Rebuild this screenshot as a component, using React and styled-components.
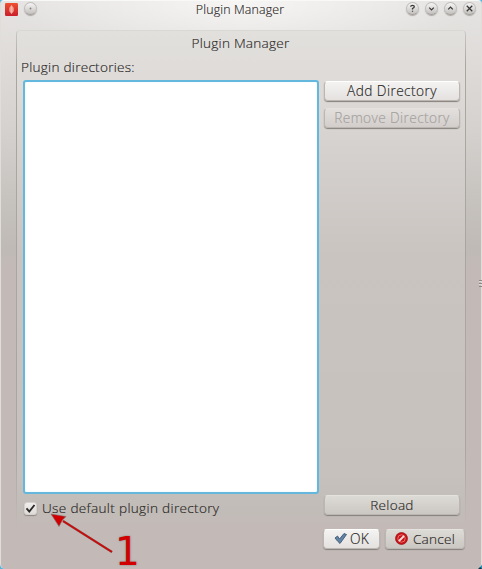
import React from "react";
import styled, { createGlobalStyle } from "styled-components";

const GlobalStyle = createGlobalStyle`
  * { box-sizing: border-box; }
  body { margin: 0; background: #58b4dc; overflow: hidden; }
`;

const Window = styled.main`
  position: relative;
  width: 482px;
  height: 569px;
  padding: 0 16px;
  border: 1px solid #e0ddda;
  border-top-color: #f8f8f7;
  border-bottom: 0;
  border-radius: 4px 4px 5px 5px;
  color: #292624;
  font: 300 14px/20px "Open Sans", "Noto Sans", sans-serif;
  background:
    radial-gradient(ellipse 230px 64px at 50% 0, rgba(255,255,255,.65), transparent),
    linear-gradient(#e6e4e2 0, #dedbd9 60px, #d5d1ce 130px, #c6c2be 200px, #bfbab6 248px, #c3bab7 268px, #c3bab7 100%);
`;

const TitleBar = styled.header`
  display: grid;
  grid-template-columns: 72px 1fr 72px;
  align-items: start;
  height: 15px;
  margin: 0 -11px 0 -13px;
`;

const WindowControls = styled.div`
  display: flex;
  padding-top: ${({ $end }) => $end ? 1 : 0}px;
  gap: 6px;
  justify-content: ${({ $end }) => $end ? "flex-end" : "flex-start"};
`;

const RoundButton = styled.button`
  width: 13px;
  height: 13px;
  padding: 0;
  border: 1px solid #c0bdbb;
  border-bottom-color: #a09d9a;
  border-radius: 50%;
  background: linear-gradient(#f5f5f5, #c4c1be);
  box-shadow: 0 1px 1px #aaa7a4;
  display: grid;
  place-items: center;
`;

const Caption = styled.span`
  display: block;
  white-space: nowrap;
  font-weight: 300;
  -webkit-text-stroke: .15px currentColor;
  font-size: ${({ $size }) => $size || 13.6}px;
  line-height: ${({ $line }) => $line || 20}px;
  letter-spacing: ${({ $track }) => $track || 0}px;
  text-align: ${({ $center }) => $center ? "center" : "left"};
`;

const Panel = styled.section`
  position: relative;
  height: 495px;
  margin-top: 14px;
  padding: 3px 5px 0 4px;
  border-radius: 4px;
  background: linear-gradient(#e2e0dd 0, #dddad7 60px, #d5d1ce 120px, #c9c4c0 225px, #c6c1bc 445px, #c1bcb7 480px, #c3bab7 495px);
  &::before {
    content: "";
    position: absolute;
    inset: 0 -1px;
    border: 1px solid #aaa5a1;
    border-bottom: 0;
    border-top-color: #cecbc8;
    border-radius: 4px 4px 0 0;
    mask-image: linear-gradient(#0006, #000 35px, #000 420px, transparent);
    pointer-events: none;
  }
`;

const PanelBody = styled.div`
  display: grid;
  grid-template-columns: 296px 136px;
  gap: 5px;
  padding-left: 2px;
  height: 436px;
  margin-top: 3px;
`;

const DirectoryList = styled.div`
  height: 414px;
  border: 2px solid #65b8dd;
  border-radius: 3px;
  background: white;
  box-shadow: inset 0 0 1px #a8ddf4;
`;

const Actions = styled.div`
  display: flex;
  flex-direction: column;
  gap: 7px;
  padding-top: 1px;
`;

const PushButton = styled.button`
  display: flex;
  align-items: center;
  justify-content: center;
  gap: ${({ $gap }) => $gap || 0}px;
  width: ${({ $width }) => $width || 136}px;
  height: 20px;
  margin-top: ${({ $bottom }) => $bottom ? "360px" : "0"};
  padding: 0 0 1px;
  border: 1px solid #bbb6b2;
  border-top-color: ${({ $light }) => $light ? "#fff" : "#e4e2de"};
  border-radius: 4px;
  background: ${({ $light, $lower }) => $light ? "linear-gradient(#f4f3f2, #e4e1df)" : $lower ? "linear-gradient(#dddbd6, #cbc7c2)" : "linear-gradient(#e2dfdd, #d3cecb)"};
  box-shadow: 0 1px 1px #86807c;
  color: inherit;
  font: inherit;
  &:disabled { color: #a5a19e; }
`;

const Option = styled.label`
  display: flex;
  align-items: center;
  gap: 5px;
  height: 22px;
  margin-top: -19px;
  padding-left: 3px;
`;

const CheckBox = styled.span`
  display: grid;
  place-items: center;
  width: 13px;
  height: 13px;
  border: 1px solid #d6d1ce;
  border-radius: 3px;
  background: linear-gradient(#f0eeec, #dfdcda);
  box-shadow: 0 1px 1px #8f8883;
`;

const DialogActions = styled.footer`
  display: flex;
  justify-content: flex-end;
  gap: 5px;
  margin-top: 4px;
`;

const Icon = styled.svg`
  display: block;
  flex: none;
  overflow: visible;
`;

const Annotation = styled.div`
  position: absolute;
  left: 49px;
  top: 510px;
  width: 90px;
  height: 58px;
  pointer-events: none;
`;

const AnnotationNumber = styled.span`
  position: absolute;
  left: 65px;
  top: 23px;
  font: 39px/35px "DejaVu Sans", sans-serif;
  color: #d20000;
  text-shadow: 0 0 2px #777;
`;

const ResizeGrip = styled.div`
  position: absolute;
  right: -1px;
  top: 279px;
  width: 3px;
  height: 7px;
  background: repeating-linear-gradient(#8d8783 0 1px, #ddd 1px 2px, transparent 2px 3px);
`;

const Corner = styled.span`
  position: absolute;
  right: -1px;
  bottom: 0;
  border: 2px solid transparent;
  border-right-color: #1791bd;
  border-bottom-color: #1b303a;
`;

const DirectoryHeading = styled.div`
  margin-top: 4px;
`;

const glyphPaths = {
  down: "M3.5 5 L6 7.5 L8.5 5",
  up: "M3.5 7 L6 4.5 L8.5 7",
  close: "M3 3 L9 9 M9 3 L3 9",
  help: "M4 4 Q4 2.5 6 2.5 Q8 2.5 8 4 Q8 5 6 6 V7 M6 8.5 V9.5"
};

function ControlButton({ kind }) {
  return (
    <RoundButton aria-label={kind}>
      <Icon width="11" height="11" viewBox="0 0 12 12">
        {kind === "menu"
          ? <circle cx="6" cy="6" r="1" fill="#85817e" />
          : <path d={glyphPaths[kind]} fill="none" stroke="#393735" strokeWidth="1.35" />}
      </Icon>
    </RoundButton>
  );
}

export default function App() {
  return (
    <>
      <GlobalStyle />
      <Window>
        <TitleBar>
          <WindowControls>
            <Icon width="14" height="15" viewBox="0 0 14 15">
              <defs><linearGradient id="appRed" x2="0" y2="1"><stop stopColor="#ef5030" /><stop offset="1" stopColor="#c91f2d" /></linearGradient></defs>
              <rect x="1" y="2" width="13" height="13" rx="1.2" fill="url(#appRed)" />
              <path d="M7.5 4 L10 7 V10 L7.5 13 L5 10 V7Z" fill="#ee8677" />
              <path d="M7.5 4 L8.5 6 V11 L7.5 13 L6.5 11 V6Z" fill="#f8b5a8" />
            </Icon>
            <WindowControls $end><ControlButton kind="menu" /></WindowControls>
          </WindowControls>
          <Caption $size={12.4} $track={0.14} $line={17} $center>Plugin Manager</Caption>
          <WindowControls $end>
            <ControlButton kind="help" /><ControlButton kind="down" /><ControlButton kind="up" /><ControlButton kind="close" />
          </WindowControls>
        </TitleBar>
        <Panel>
          <Caption $track={0.22} $center>Plugin Manager</Caption>
          <DirectoryHeading><Caption $track={0.25}>Plugin directories:</Caption></DirectoryHeading>
          <PanelBody>
            <DirectoryList />
            <Actions>
              <PushButton $light><Caption $size={13.7} $track={0.43}>Add Directory</Caption></PushButton>
              <PushButton disabled><Caption $size={13.7} $track={0.38}>Remove Directory</Caption></PushButton>
              <PushButton $bottom $lower><Caption $track={0.25}>Reload</Caption></PushButton>
            </Actions>
          </PanelBody>
          <Option>
            <CheckBox><Icon width="11" height="11" viewBox="0 0 11 11"><path d="M1.5 5.3 L4.3 8.5 L9.5 2" fill="none" stroke="#292827" strokeWidth="1.8" /></Icon></CheckBox>
            <Caption $track={0.32}>Use default plugin directory</Caption>
          </Option>
        </Panel>
        <DialogActions>
          <PushButton $width={57} $gap={3} $light>
            <Icon width="13" height="13" viewBox="0 0 13 13"><path d="M1 6 L3.5 4 L5.5 7 L10 1.5 L12.5 2.5 L6 11.5 Q4 10 1 6Z" fill="#6384a5" stroke="#344f69" strokeWidth=".8" /></Icon>
            <Caption $size={13.8} $track={0.1}>OK</Caption>
          </PushButton>
          <PushButton $width={80} $gap={5} $lower>
            <Icon width="13" height="13" viewBox="0 0 13 13"><circle cx="6.5" cy="6.5" r="6" fill="#c91318" stroke="#991014" strokeWidth=".7" /><circle cx="6.5" cy="6.5" r="3.7" fill="none" stroke="#e77d79" strokeWidth=".9" /><path d="M4 9 L9 4" stroke="#f3dedb" strokeWidth="1.8" /></Icon>
            <Caption $track={0.25}>Cancel</Caption>
          </PushButton>
        </DialogActions>
        <Annotation>
          <Icon width="64" height="42" viewBox="0 0 64 42"><path d="M13 10 L62 41" stroke="#777" strokeWidth="2.5" /><path d="M13 10 L62 41" stroke="#cf0808" strokeWidth="1.7" /><path d="M1 3 L16 5.5 L12.5 9 L9 15.5Z" fill="#d20000" stroke="#777" strokeWidth=".6" /></Icon>
          <AnnotationNumber>1</AnnotationNumber>
        </Annotation>
        <ResizeGrip />
        <Corner />
      </Window>
    </>
  );
}
